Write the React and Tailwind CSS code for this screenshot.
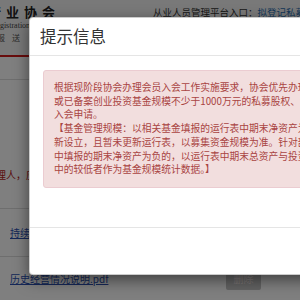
const lines = [
  "根据现阶段协会办理会员入会工作实施要求，协会优先办理已备案私募证券投资基金规模不少于1亿元、",
  "或已备案创业投资基金规模不少于1000万元的私募股权、创业投资基金管理人的",
  "入会申请。",
  "【基金管理规模：以相关基金填报的运行表中期末净资产为准；若基金为",
  "新设立，且暂未更新运行表，以募集资金规模为准。针对部分基金在运行表",
  "中填报的期末净资产为负的，以运行表中期末总资产与投资者投入资金",
  "中的较低者作为基金规模统计数据。】",
]

export default function App() {
  return (
    <div
      className="relative w-[300px] h-[300px] overflow-hidden bg-white"
      style={{ fontFamily: '"Noto Sans CJK SC", "Noto Sans", sans-serif' }}
    >
      {/* page behind the dialog */}
      <div className="flex flex-col">
        <div className="h-[55px] bg-[#f2f2f2] flex justify-between">
          <div className="flex flex-col">
            <div
              className="ml-[-12px] mt-[5px] text-[13px] leading-[16px] font-bold tracking-[5px] text-[#222] whitespace-nowrap"
              style={{ fontFamily: '"Liberation Serif", "Noto Sans CJK SC", serif' }}
            >
              行业协会
            </div>
            <div className="ml-[-9px] text-[8px] leading-[10px] text-[#444] whitespace-nowrap" style={{ fontFamily: '"Liberation Serif", serif' }}>
              Registration
            </div>
            <div className="ml-[-3px] mt-[2px] text-[8px] leading-[10px] tracking-[7px] text-[#555] whitespace-nowrap">
              报送
            </div>
          </div>
          <div className="pt-[5px] text-[9.5px] leading-[14px] text-[#333] whitespace-nowrap w-[147px] overflow-hidden">
            从业人员管理平台入口：<span className="text-[#2a6fb0] underline">拟登记私募基金管理人</span>
          </div>
        </div>
        <div className="h-[2px] bg-[#d01818]" />
        <div className="h-[23px] border-b border-[#ddd]" />
        <div className="h-[129px] pt-[88px] border-b border-[#ddd]">
          <div className="ml-[-14px] text-[10px] leading-[14px] text-[#b52020] whitespace-nowrap">管理人，应</div>
        </div>
        <div className="h-[48px] flex items-center px-[10px] border-b border-[#ddd]">
          <span className="text-[10px] text-[#2a4fb0] underline whitespace-nowrap">持续经营情况说明.pdf</span>
        </div>
        <div className="pt-[9px] flex items-center justify-between pl-[10px] pr-[39px]">
          <span className="text-[10px] text-[#2a4fb0] underline whitespace-nowrap">历史经营情况说明.pdf</span>
          <span className="h-[24px] w-[35px] flex items-center justify-center bg-[#c4c4c4] rounded-[2px] text-[10px] text-[#f4e8e8]">删除</span>
        </div>
      </div>

      {/* backdrop */}
      <div className="absolute inset-0 bg-black/50" />

      {/* dialog */}
      <div className="absolute left-[29px] top-[17px] w-[430px] h-[258px] bg-white rounded-[4px] border border-black/20 shadow-[0_5px_15px_rgba(0,0,0,0.5)] flex flex-col">
        <div className="h-[38px] flex items-center px-[10px] border-b border-[#e5e5e5]">
          <span className="text-[16.5px] text-[#333]">提示信息</span>
        </div>
        <div className="h-[171px] px-[13px] pt-[14px]">
          <div className="border border-[#ebccd1] bg-[#f2dede] rounded-[3px] px-[10px] py-[10px] text-[9.75px] leading-[13.7px] text-[#a94442] whitespace-nowrap overflow-hidden">
            {lines.map((l, i) => (
              <div key={i}>{l}</div>
            ))}
          </div>
        </div>
        <div className="flex-1 border-t border-[#e5e5e5]" />
      </div>
    </div>
  )
}
